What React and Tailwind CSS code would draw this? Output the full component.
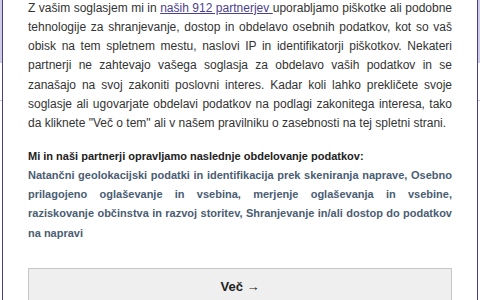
import React from 'react';

const INTRO_LINES = [
  'tehnologije za shranjevanje, dostop in obdelavo osebnih podatkov, kot so vaš',
  'obisk na tem spletnem mestu, naslovi IP in identifikatorji piškotkov. Nekateri',
  'partnerji ne zahtevajo vašega soglasja za obdelavo vaših podatkov in se',
  'zanašajo na svoj zakoniti poslovni interes. Kadar koli lahko prekličete svoje',
  'soglasje ali ugovarjate obdelavi podatkov na podlagi zakonitega interesa, tako',
];

const PURPOSE_LINES = [
  'Natančni geolokacijski podatki in identifikacija prek skeniranja naprave, Osebno',
  'prilagojeno oglaševanje in vsebina, merjenje oglaševanja in vsebine,',
  'raziskovanje občinstva in razvoj storitev, Shranjevanje in/ali dostop do podatkov',
];

// justified line that keeps the break where the original has it
const Line = ({ children }) => (
  <span className="block text-justify [text-align-last:justify]">{children}</span>
);

// strip of the page that peeks out beside the dialog
const SideStrip = () => (
  <div className="w-[2px] flex flex-col">
    <div className="h-[63px] bg-[#cfcbe6]" />
    <div className="h-[37px] bg-white" />
    <div className="h-px bg-[#c9c9c9]" />
    <div className="flex-1 bg-white" />
  </div>
);

export default function App() {
  return (
    <div
      className="w-[480px] h-[300px] overflow-hidden bg-white flex"
      style={{ fontFamily: '"Liberation Sans", Arial, sans-serif' }}
    >
      <SideStrip />
      <div className="flex-1 border-x border-[#4b3f8c] bg-white px-[25px]">
        <p className="-mt-[1.5px] text-[12px] leading-[19.3px] text-[#333333] whitespace-nowrap">
          <Line>
            Z vašim soglasjem mi in{' '}
            <a href="#" className="text-[#4b3f8f] underline">naših 912 partnerjev </a>
            uporabljamo piškotke ali podobne
          </Line>
          {INTRO_LINES.map(l => <Line key={l}>{l}</Line>)}
          <span className="block">da kliknete "Več o tem" ali v našem pravilniku o zasebnosti na tej spletni strani.</span>
        </p>

        <div className="mt-[13px] text-[11px] leading-[19.3px] font-bold whitespace-nowrap">
          <p className="text-[#222222]">Mi in naši partnerji opravljamo naslednje obdelovanje podatkov:</p>
          <p className="text-[#4a5d73]">
            {PURPOSE_LINES.map(l => <Line key={l}>{l}</Line>)}
            <span className="block">na napravi</span>
          </p>
        </div>

        <button className="mt-[25px] w-full h-[37px] bg-[#efefef] border border-[#c6c6c6] text-[13px] font-bold text-[#222222]">
          Več →
        </button>
      </div>
      <SideStrip />
    </div>
  );
}
